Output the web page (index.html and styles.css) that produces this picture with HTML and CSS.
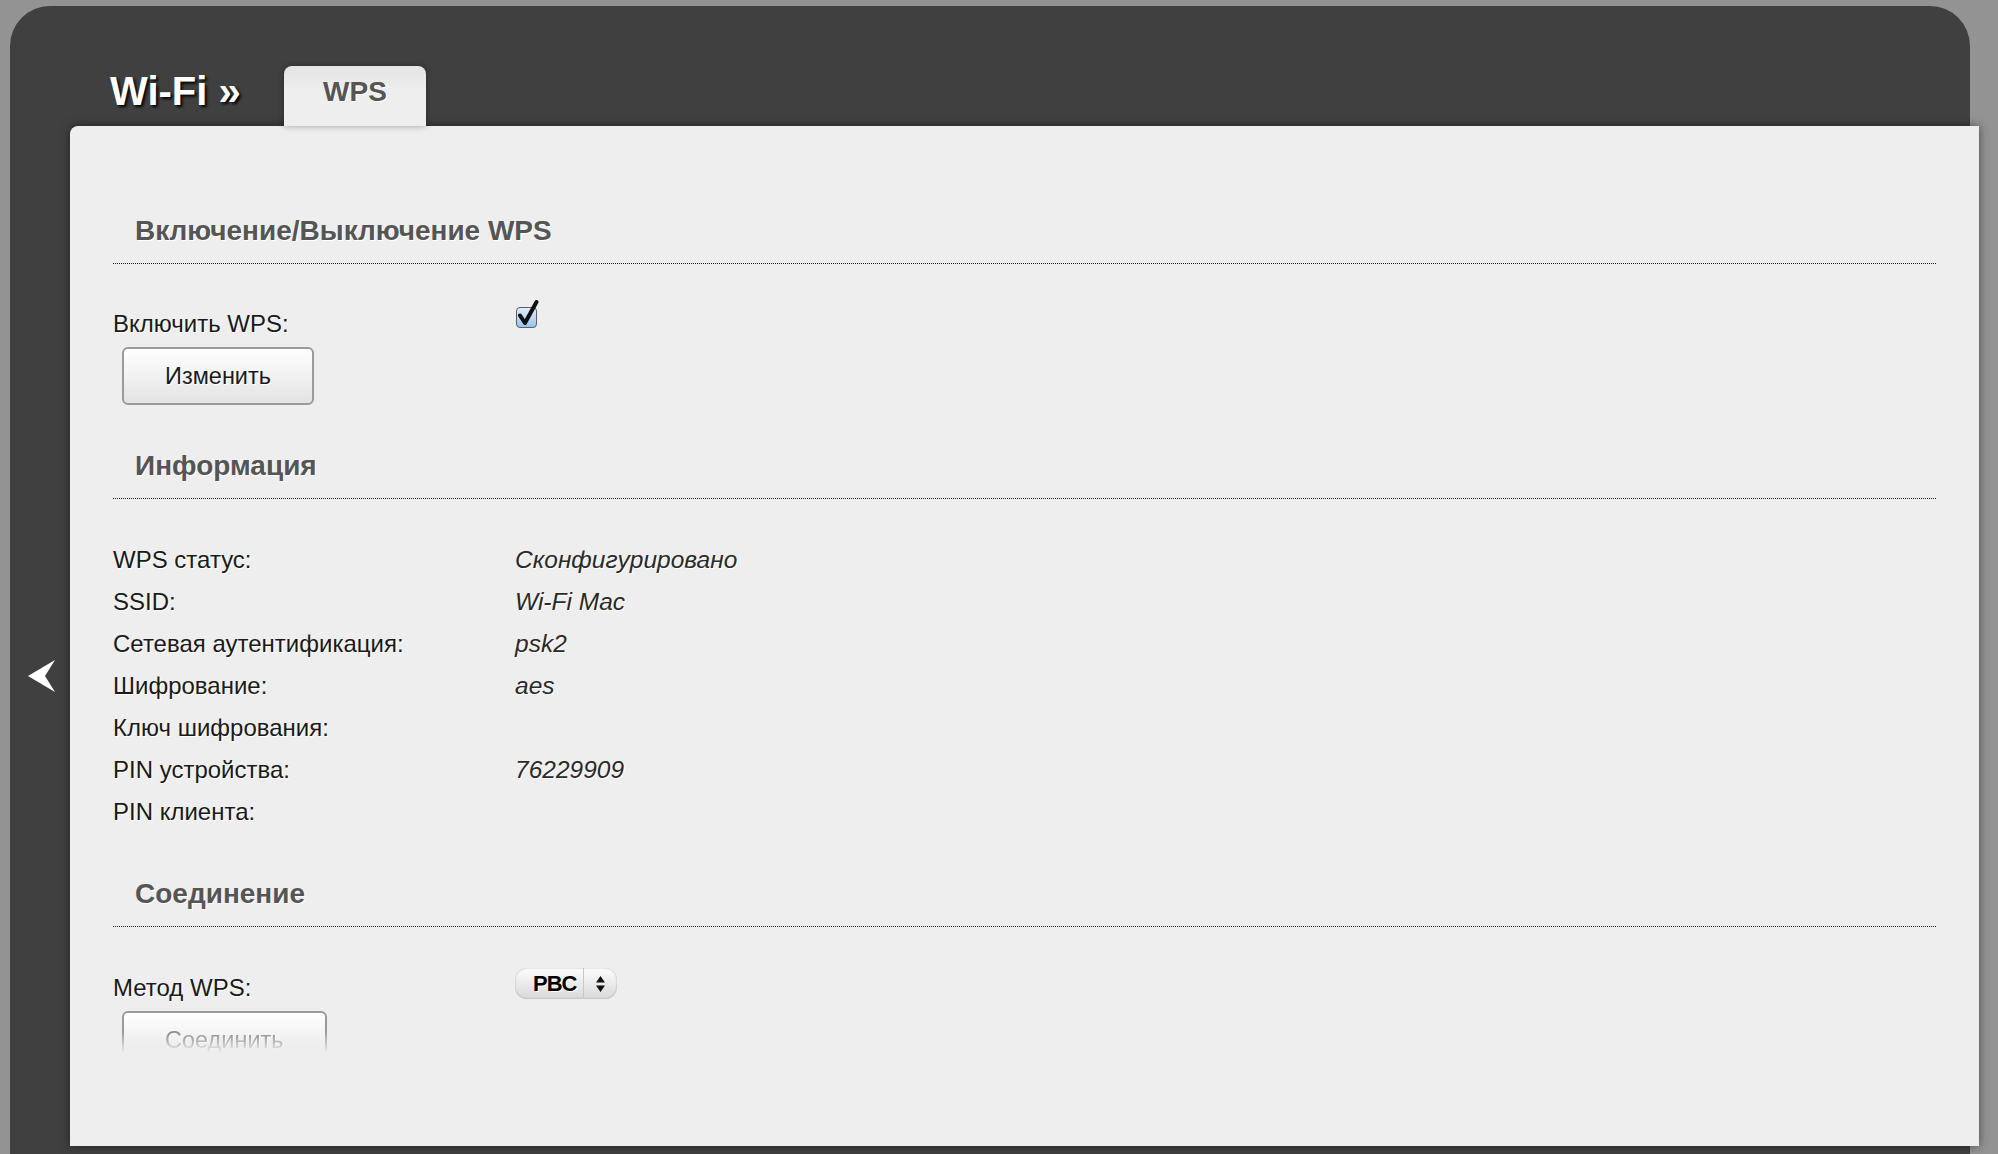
FILE: index.html
```html
<!DOCTYPE html>
<html lang="ru">
<head>
    <meta charset="UTF-8">
    <meta name="viewport" content="width=device-width, initial-scale=1.0">
    <title>Wi-Fi » WPS</title>
    <link rel="stylesheet" href="styles.css">
</head>
<body>
    <div class="frame">
        <div class="top">
            <div class="crumb">Wi-Fi »</div>
            <div class="tab">WPS</div>
        </div>
        <div class="main">
            <div class="side">
                <svg class="back" width="30" height="34" viewBox="0 0 30 34">
                    <path d="M28 1 L1 17 L28 33 L18 17 Z" fill="#fff"/>
                </svg>
            </div>
            <div class="panel">
                <div class="section-title first">Включение/Выключение WPS</div>
                <div class="row">
                    <span class="label">Включить WPS:</span>
                    <span class="value">
                        <svg class="checkbox" width="28" height="28" viewBox="0 0 28 28">
                            <defs>
                                <linearGradient id="cb" x1="0" y1="0" x2="0" y2="1">
                                    <stop offset="0" stop-color="#e4eefa"/>
                                    <stop offset="1" stop-color="#98c2ee"/>
                                </linearGradient>
                            </defs>
                            <rect x="1.5" y="7.5" width="20" height="20" rx="3.5" fill="url(#cb)" stroke="#5a5f66"/>
                            <path d="M5 15.5 L10 23 L21.5 2" fill="none" stroke="#111" stroke-width="4" stroke-linejoin="round" stroke-linecap="round"/>
                        </svg>
                    </span>
                </div>
                <button class="button">Изменить</button>

                <div class="section-title">Информация</div>
                <div class="info">
                    <div class="info-row"><span class="label">WPS статус:</span><span class="value">Сконфигурировано</span></div>
                    <div class="info-row"><span class="label">SSID:</span><span class="value">Wi-Fi Mac</span></div>
                    <div class="info-row"><span class="label">Сетевая аутентификация:</span><span class="value">psk2</span></div>
                    <div class="info-row"><span class="label">Шифрование:</span><span class="value">aes</span></div>
                    <div class="info-row"><span class="label">Ключ шифрования:</span><span class="value"></span></div>
                    <div class="info-row"><span class="label">PIN устройства:</span><span class="value">76229909</span></div>
                    <div class="info-row"><span class="label">PIN клиента:</span><span class="value"></span></div>
                </div>

                <div class="section-title">Соединение</div>
                <div class="row row-method">
                    <span class="label">Метод WPS:</span>
                    <span class="value">
                        <span class="select">
                            <span class="select-text">PBC</span>
                            <span class="select-arrows">
                                <svg width="11" height="18" viewBox="0 0 11 18">
                                    <path d="M5.5 1 L10 7.5 L1 7.5 Z M5.5 17 L10 10.5 L1 10.5 Z" fill="#111"/>
                                </svg>
                            </span>
                        </span>
                    </span>
                </div>
                <div class="fade">
                    <button class="button disabled">Соединить</button>
                </div>
            </div>
        </div>
    </div>
</body>
</html>
```

FILE: styles.css
```css
body {
    margin: 0;
    padding: 0;
    background-color: #939393;
    font-family: "Liberation Sans", Arial, sans-serif;
    overflow: hidden;
}

.frame {
    margin: 6px 0 0 10px;
    width: 1960px;
    height: 1148px;
    background: #404040;
    border-radius: 40px 40px 0 0;
}

.top {
    height: 120px;
    display: flex;
    align-items: flex-end;
    padding-left: 100px;
}

.crumb {
    width: 174px;
    margin-bottom: 15px;
    font-size: 40px;
    line-height: 40px;
    font-weight: bold;
    color: #fff;
    text-shadow: 2px 2px 3px #000;
}

.tab {
    width: 142px;
    height: 60px;
    box-sizing: border-box;
    padding-top: 12px;
    text-align: center;
    font-size: 28px;
    line-height: 28px;
    font-weight: bold;
    color: #555;
    text-shadow: 1px 1px 0 #fff;
    background: linear-gradient(#e4e4e4, #eeeeee 40%);
    border-radius: 8px 8px 0 0;
    box-shadow: 0 0 6px rgba(0, 0, 0, 0.35);
    position: relative;
    z-index: 2;
}

.main {
    display: flex;
    height: 1020px;
}

.side {
    width: 60px;
    flex-shrink: 0;
    padding: 533px 0 0 17px;
    box-sizing: border-box;
}

.panel {
    width: 1909px;
    flex-shrink: 0;
    box-sizing: border-box;
    padding: 90px 43px 0;
    background: #eeeeee;
    border-radius: 8px 0 0 0;
    box-shadow: 0 0 10px rgba(0, 0, 0, 0.5);
    position: relative;
    z-index: 1;
    color: #1a1a1a;
    text-shadow: 1px 1px 0 #fff;
}

.section-title {
    margin-top: 46px;
    padding: 0 0 17px 22px;
    font-size: 28px;
    line-height: 30px;
    font-weight: bold;
    color: #555;
    border-bottom: 1px dotted #1e1e1e;
}

.section-title.first {
    margin-top: 0;
}

.row {
    display: flex;
    margin-top: 47px;
    font-size: 24px;
    line-height: 26px;
}

.row-method {
    margin-top: 48px;
}

.label {
    width: 402px;
    flex-shrink: 0;
}

.value {
    display: flex;
    font-style: italic;
    font-size: 24.5px;
    color: #2a2a2a;
}

.checkbox {
    margin-top: -11px;
}

.info {
    margin-top: 40px;
}

.info-row {
    display: flex;
    font-size: 24px;
    line-height: 42px;
}

.button {
    display: block;
    margin: 10px 0 0 9px;
    height: 58px;
    padding: 0 41px;
    font-family: "Liberation Sans", Arial, sans-serif;
    font-size: 23.5px;
    color: #1a1a1a;
    text-shadow: 1px 1px 0 #fff;
    background: linear-gradient(#ffffff, #e3e3e3);
    border: 2px solid #9a9a9a;
    border-radius: 6px;
}

.fade {
    height: 52px;
    overflow: hidden;
    -webkit-mask-image: linear-gradient(to bottom, #000 60%, transparent 100%);
    mask-image: linear-gradient(to bottom, #000 60%, transparent 100%);
}

.button.disabled {
    color: #8c8c8c;
}

.select {
    display: flex;
    align-items: center;
    width: 102px;
    height: 31px;
    margin-top: -7px;
    border-radius: 12px;
    background: linear-gradient(#fdfdfd, #d8d8d8);
    box-shadow: inset 0 0 2px rgba(0, 0, 0, 0.3);
    font-style: normal;
}

.select-text {
    width: 50px;
    padding-left: 18px;
    font-size: 22px;
    font-weight: bold;
    color: #000;
    letter-spacing: -1px;
}

.select-arrows {
    flex: 1;
    height: 100%;
    display: flex;
    align-items: center;
    justify-content: center;
    border-left: 1px solid #c8c8c8;
}
```
